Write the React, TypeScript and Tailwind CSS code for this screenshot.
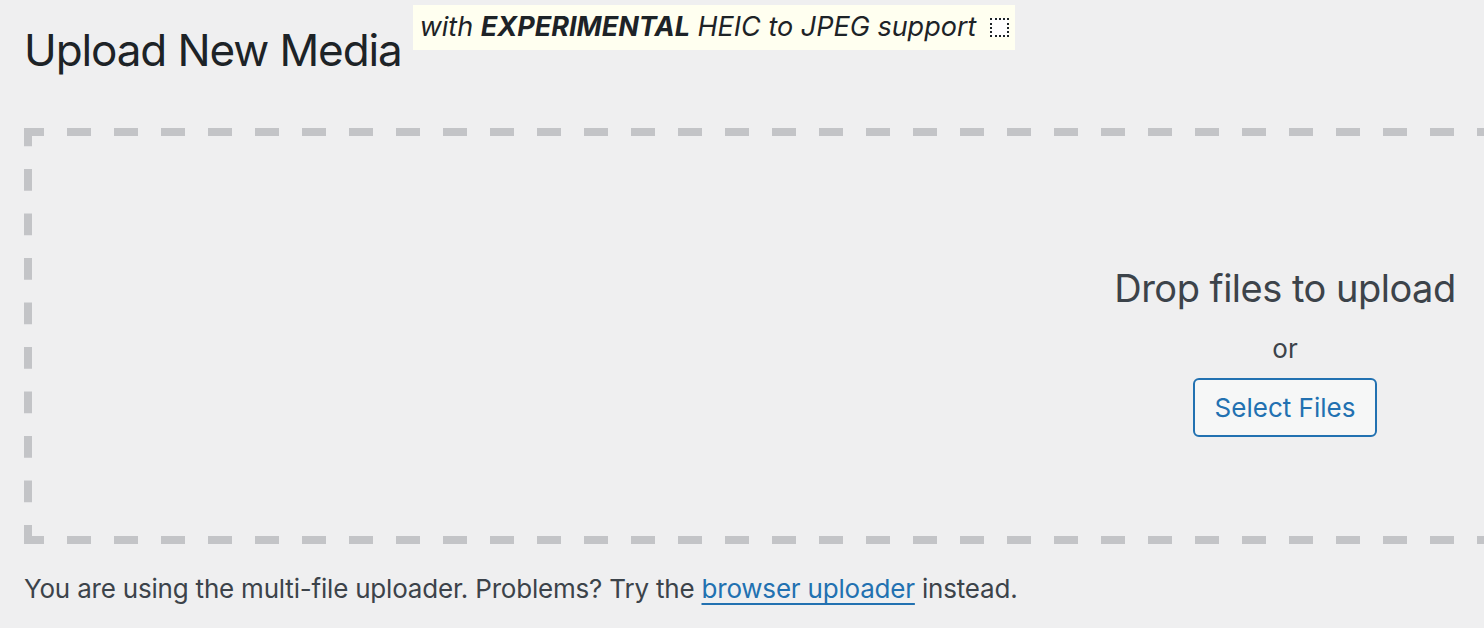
import React from "react";

export default function App() {
  return (
    <div className="w-[1484px] h-[628px] overflow-hidden bg-[#efeff0] font-['Inter','Noto_Sans',sans-serif] text-[#3c434a]">
      <div className="pl-6">
        <div className="flex items-start">
          <h1 className="mt-[24px] text-[44px] leading-[52px] font-normal text-[#1d2327] tracking-[-1.1px]">
            Upload New Media
          </h1>
          <div className="ml-[11px] mt-[5px] flex h-[45px] items-center bg-[#fffff0] pl-[7px] pr-[6px] text-[27px] italic text-[#1d2327]">
            <span>
              with <b className="font-bold">EXPERIMENTAL</b> HEIC to JPEG support
            </span>
            <span className="ml-[14px] inline-block h-[19px] w-[19px] border-2 border-dotted border-[#1d2327] bg-white" />
          </div>
        </div>
        <div className="mt-[52px] flex h-[416px] w-[2522px] flex-col items-center p-[8px] [background-image:linear-gradient(90deg,#c3c4c7_24px,transparent_24px),linear-gradient(90deg,#c3c4c7_24px,transparent_24px),linear-gradient(#c3c4c7_22px,transparent_22px)] [background-size:47px_8px,47px_8px,8px_44.5px] [background-position:-4px_0,-4px_100%,0_-3.5px] [background-repeat:repeat-x,repeat-x,repeat-y]">
          <p className="mt-[129px] text-[38px] leading-[46px] tracking-[-0.5px] text-[#3c434a]">Drop files to upload</p>
          <p className="mt-[20px] text-[26px] leading-[36px] text-[#3c434a]">or</p>
          <button className="mt-[11px] h-[59px] w-[184px] rounded-[6px] border-2 border-[#2271b1] bg-[#f6f7f7] text-[26px] text-[#2271b1]">
            Select Files
          </button>
        </div>
        <p className="mt-[27px] text-[26px] leading-[36px] tracking-[-0.2px] text-[#3c434a]">
          You are using the multi-file uploader. Problems? Try the{" "}
          <a href="#" className="text-[#2271b1] underline decoration-2 underline-offset-[5px]">
            browser uploader
          </a>{" "}
          instead.
        </p>
      </div>
    </div>
  );
}
